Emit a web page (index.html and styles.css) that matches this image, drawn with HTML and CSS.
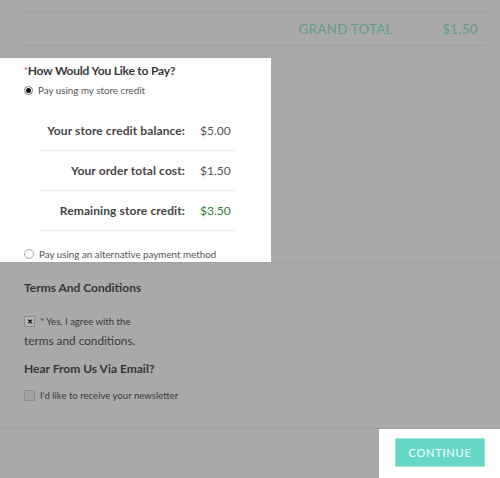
FILE: index.html
```html
<!DOCTYPE html>
<html>
<head>
<meta charset="utf-8">
<link rel="stylesheet" href="styles.css">
</head>
<body>
<div class="summary">
  <div class="sum-row sub"><span class="sum-label">Subtotal</span><span class="sum-value">$1.50</span></div>
  <div class="sum-row total"><span class="sum-label">GRAND TOTAL</span><span class="sum-value">$1.50</span></div>
</div>

<div class="pay-section">
  <div class="pay-panel">
    <div class="pay-title"><span class="req">*</span>How Would You Like to Pay?</div>
    <label class="radio-row"><span class="radio checked"></span>Pay using my store credit</label>
    <div class="credit-table">
      <div class="credit-row"><span class="c-label">Your store credit balance:</span><span class="c-value">$5.00</span></div>
      <div class="credit-row"><span class="c-label">Your order total cost:</span><span class="c-value">$1.50</span></div>
      <div class="credit-row"><span class="c-label">Remaining store credit:</span><span class="c-value green">$3.50</span></div>
    </div>
    <label class="radio-row alt"><span class="radio"></span>Pay using an alternative payment method</label>
  </div>
</div>

<div class="terms">
  <div class="section-title">Terms And Conditions</div>
  <label class="check-row first"><span class="checkbox checked">&#x2715;</span>* Yes, I agree with the</label>
  <div class="terms-link">terms and conditions.</div>
  <div class="section-title email">Hear From Us Via Email?</div>
  <label class="check-row last"><span class="checkbox"></span>I'd like to receive your newsletter</label>
</div>

<div class="footer">
  <div class="btn-box"><button class="continue">CONTINUE</button></div>
</div>
</body>
</html>
```
FILE: styles.css
```css
html, body {
  margin: 0;
  padding: 0;
}
body {
  background: #a9a9a9;
  font-family: "Lato", "Noto Sans", sans-serif;
  color: #3c3c3c;
  width: 500px;
  height: 478px;
  overflow: hidden;
}

.summary {
  margin: -20px 15px 12px 24px;
}
.sum-row {
  display: grid;
  grid-template-columns: 369px 92px;
  height: 33px;
  align-items: center;
  border-bottom: 1px solid #9e9e9e;
  box-sizing: border-box;
  font-size: 12px;
  letter-spacing: 0.5px;
  color: #454545;
}
.sum-row.sub { padding-bottom: 4px; }
.sum-label { text-align: right; }
.sum-value { text-align: right; padding-right: 7px; }
.sum-row.total { color: #5f9c8b; font-size: 13px; }

.pay-section {
  border-bottom: 1px solid #a0a0a0;
}
.pay-panel {
  width: 271px;
  height: 204px;
  background: #fff;
  box-sizing: border-box;
  padding: 5px 0 0 24px;
}
.pay-title {
  font-size: 12px;
  font-weight: 700;
  color: #383838;
  line-height: 16px;
  letter-spacing: -0.2px;
}
.req { color: #c62828; font-weight: 400; font-size: 9px; vertical-align: top; }
.radio-row {
  display: flex;
  align-items: center;
  gap: 5px;
  font-size: 9.8px;
  color: #555;
  height: 16px;
  margin-top: 3px;
}
.radio {
  width: 9px;
  height: 9px;
  border: 1px solid #777;
  border-radius: 50%;
  box-sizing: border-box;
  display: flex;
  align-items: center;
  justify-content: center;
  background: #fff;
  flex: none;
}
.radio.checked::after {
  content: "";
  width: 5px;
  height: 5px;
  border-radius: 50%;
  background: #111;
}
.radio-row.alt { margin-top: 15px; }
.radio-row.alt .radio { border-color: #aaa; width: 10px; height: 10px; }

.credit-table {
  margin: 13px 0 0 15px;
  width: 197px;
}
.credit-row {
  display: grid;
  grid-template-columns: 152px 45px;
  height: 40px;
  align-items: center;
  border-bottom: 1px solid #eaeaea;
  box-sizing: border-box;
  font-size: 12px;
}
.c-label { text-align: right; font-weight: 700; color: #444; padding-right: 6px; letter-spacing: 0.1px; }
.c-value { padding-left: 9px; color: #555; }
.c-value.green { color: #2e7d32; }

.terms {
  padding: 17px 0 0 24px;
  height: 166px;
  box-sizing: border-box;
  border-bottom: 1px solid #9e9e9e;
}
.section-title {
  font-size: 12px;
  font-weight: 700;
  color: #363636;
  line-height: 16px;
}
.check-row {
  display: flex;
  align-items: center;
  gap: 5px;
  font-size: 9.6px;
  color: #3a3a3a;
  height: 12px;
}
.check-row.first { margin-top: 19px; }
.checkbox {
  width: 11px;
  height: 11px;
  border: 1px solid #8c8c8c;
  box-sizing: border-box;
  font-size: 7px;
  line-height: 9px;
  text-align: center;
  color: #000;
  font-weight: 700;
  background: #a3a3a3;
  flex: none;
}
.checkbox.checked { background: #b5b5b5; }
.terms-link {
  font-size: 11.8px;
  color: #3a3a3a;
  margin-top: 6px;
  line-height: 16px;
}
.section-title.email { margin-top: 12px; }
.check-row.last { margin-top: 12px; }

.footer {
  display: flex;
  justify-content: flex-end;
}
.btn-box {
  width: 121px;
  height: 50px;
  background: #fff;
  box-sizing: border-box;
  padding: 9px 15px 0 16px;
}
.continue {
  display: block;
  width: 90px;
  height: 29px;
  background: #64d8c5;
  border: 1px solid #9ee8da;
  color: #fff;
  font-family: "Lato", "Noto Sans", sans-serif;
  font-size: 11px;
  letter-spacing: 0.8px;
  padding: 0;
}
```
